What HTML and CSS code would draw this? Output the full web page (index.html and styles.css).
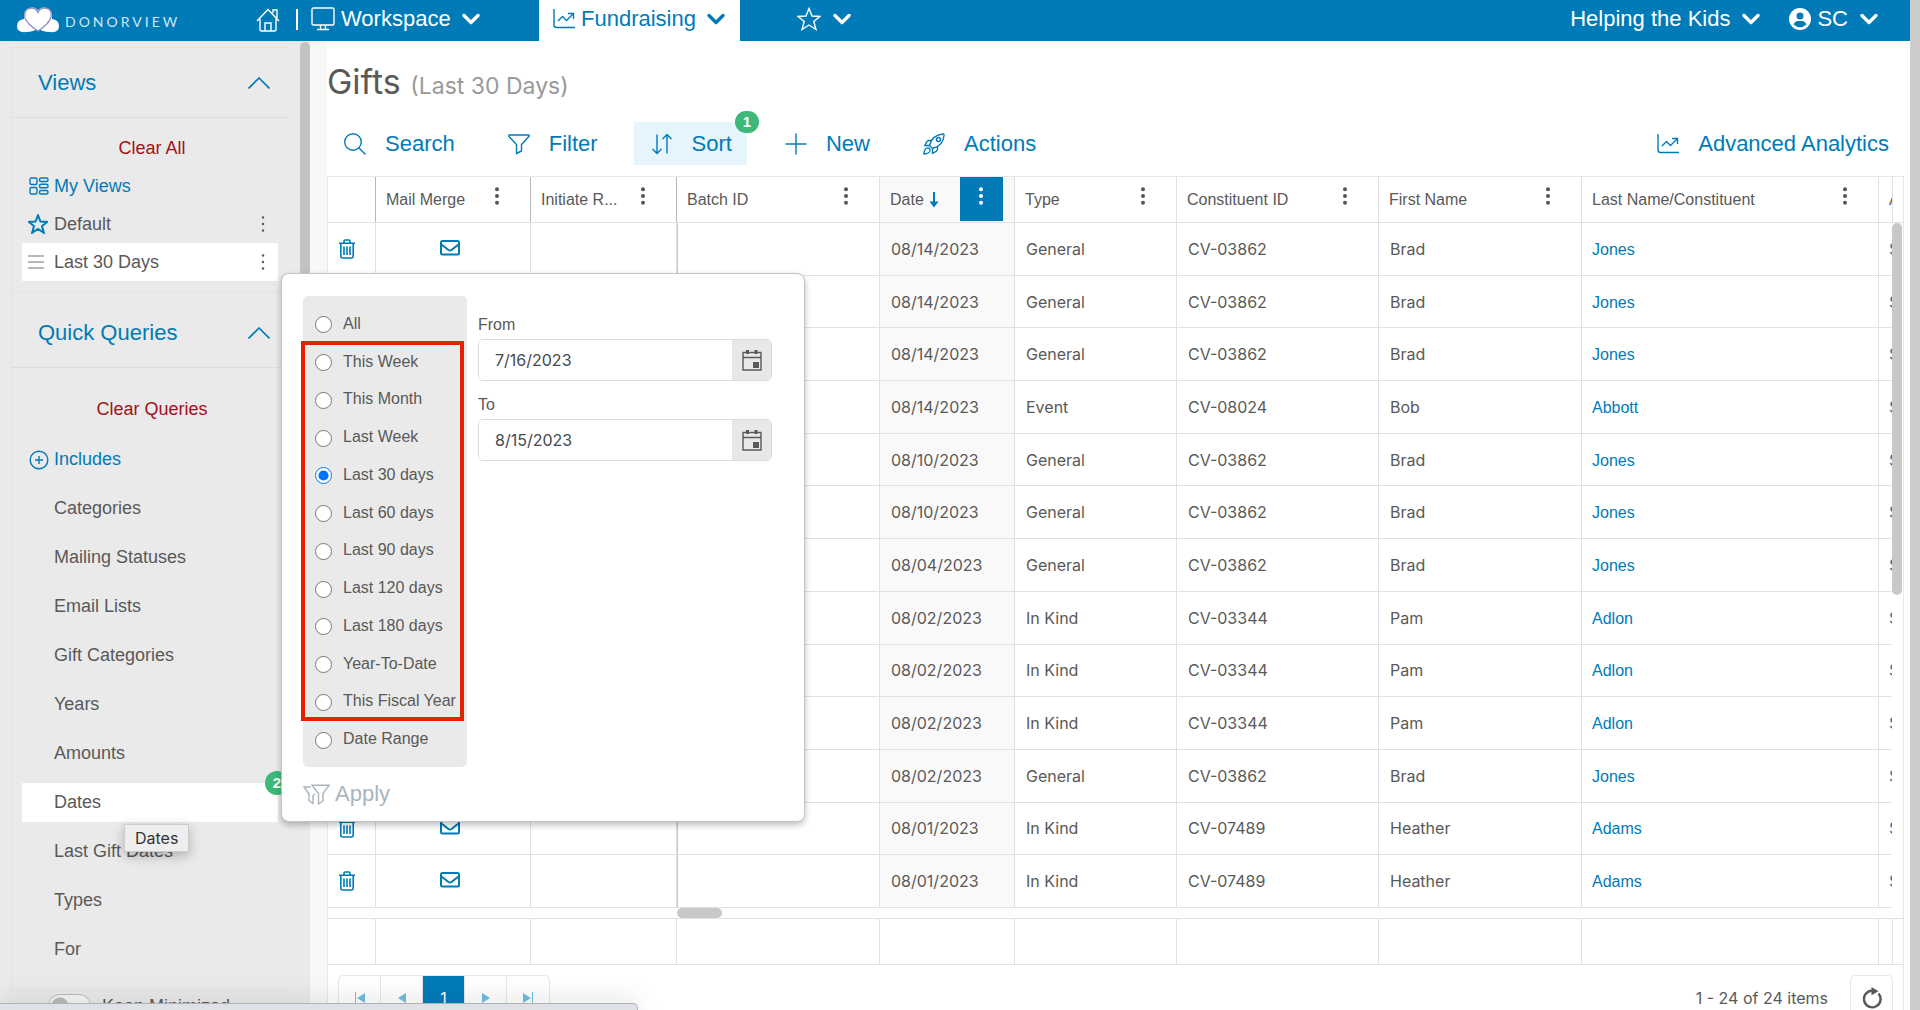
FILE: index.html
```html
<!DOCTYPE html>
<html lang="en">
<head>
    <meta charset="UTF-8">
    <meta name="viewport" content="width=device-width, initial-scale=1.0">
    <title>Gifts - DonorView</title>
    <link rel="stylesheet" href="styles.css">
</head>
<body>

    <!-- Icon set -->
    <svg class="icon-set" aria-hidden="true">
        <symbol id="i-home" viewBox="0 0 24 24"><path d="M1 13 12 1.5 23 13M17 5V2h4v8M4 11v10.5q0 1.5 1.500 1.500h13q1.500 0 1.500-1.500V11M9 23v-8h6v8"/></symbol>
        <symbol id="i-monitor" viewBox="0 0 24 24"><path d="M2.500 1h19q1.500 0 1.500 1.500v14q0 1.500-1.500 1.500h-19Q1 18 1 16.500v-14Q1 1 2.500 1zM9.500 18v4M14.500 18v4M6 22.500h12"/></symbol>
        <symbol id="i-chart" viewBox="0 0 22 22"><path d="M1 1v16q0 2.500 2.500 2.500H22M5 13l4.500-4.500 4 4L20 6M15 5.500h5.500V11"/></symbol>
        <symbol id="i-star" viewBox="0 0 24 24"><path d="M12 1.500l3 7.500 8 .5-6.200 5 2.200 8-7-4.500-7 4.500 2.200-8L1 9.500 9 9z"/></symbol>
        <symbol id="i-down" viewBox="0 0 18 12"><path d="M2 2.500l7 7 7-7"/></symbol>
        <symbol id="i-up" viewBox="0 0 22 12"><path d="M.5 11.500 11 1l10.500 10.500"/></symbol>
        <symbol id="i-search" viewBox="0 0 22 22"><circle cx="9" cy="9" r="8.300"/><path d="M15 15l6.500 6.500"/></symbol>
        <symbol id="i-filter" viewBox="0 0 22 22"><path d="M1.200 2h19.600q.8.600 0 1.600L13.500 11.500V18l-5 2.500v-9L1 3.600Q.5 2.500 1.200 2z"/></symbol>
        <symbol id="i-sort" viewBox="0 0 22 22"><path d="M6 1.500v19M1.500 16 6 20.500l4.500-4.500M16 20.500v-19M11.500 6 16 1.500 20.500 6"/></symbol>
        <symbol id="i-plus" viewBox="0 0 22 22"><path d="M11 .5v21M.5 11h21"/></symbol>
        <symbol id="i-rocket" viewBox="0 0 22 22"><path d="M6.500 12.500Q9 2 20 1q1.200 0 1 1.200-.5 10.300-11.500 13.300zM9 7.500H6q-1.500 0-2.300 1.300L1.800 12.500l4.700 0M14.500 13v3q0 1.500-1.300 2.300l-3.700 2 0-4.800M5.500 15q-2-.5-3.200 1.200Q1 18 1 21q3 0 4.700-1.200Q7.500 18.500 7 16.500 6.500 15.300 5.500 15z"/><circle cx="15.500" cy="6.500" r="2"/></symbol>
        <symbol id="i-views" viewBox="0 0 20 18"><rect x="1" y="1" width="7" height="6.500" rx="1.500"/><rect x="1" y="10.500" width="7" height="6.500" rx="1.500"/><rect x="10.500" y="1" width="8.500" height="3.500" rx="1.500"/><rect x="10.500" y="7.200" width="8.500" height="3.500" rx="1.500"/><rect x="10.500" y="13.500" width="8.500" height="3.500" rx="1.500"/></symbol>
        <symbol id="i-bars" viewBox="0 0 18 16"><path d="M1 2h16M1 8h16M1 14h16"/></symbol>
        <symbol id="i-pluscircle" viewBox="0 0 20 20"><circle cx="10" cy="10" r="8.800"/><path d="M10 6v8M6 10h8"/></symbol>
        <symbol id="i-dots" viewBox="0 0 6 18"><circle cx="3" cy="2.300" r="2"/><circle cx="3" cy="9" r="2"/><circle cx="3" cy="15.700" r="2"/></symbol>
        <symbol id="i-dots-small" viewBox="0 0 6 18"><circle cx="3" cy="2.500" r="1.200"/><circle cx="3" cy="9" r="1.200"/><circle cx="3" cy="15.500" r="1.200"/></symbol>
        <symbol id="i-trash" viewBox="0 0 16 20"><path d="M0 4.200h16M5 4V2q0-1 1-1h4q1 0 1 1v2M1.800 4.500V17q0 2 2 2h8.400q2 0 2-2V4.500M5 7.500v8.500M8 7.500v8.500M11 7.500v8.500"/></symbol>
        <symbol id="i-mail" viewBox="0 0 20 16"><rect x="1" y="1" width="18" height="13.500" rx="1.500"/><path d="M1.500 4.500 8.500 10q1.500 1 3 0l7-5.500"/></symbol>
        <symbol id="i-calendar" viewBox="0 0 20 22"><path d="M1 3.500h18v17.500H1zM1 8.500h18"/><path class="solid" d="M4 1h3v4H4zM12.500 1h3v4h-3zM11 13h6v6h-6z"/></symbol>
        <symbol id="i-arrow" viewBox="0 0 10 16"><path d="M5 0v12"/><path class="solid" d="M.5 9.500h9L5 15.500z"/></symbol>
        <symbol id="i-filters" viewBox="0 0 27 21"><path d="M9 1.200h17.200L20 9.500v7.500l-4.500 3V9.500zM7.500 3H1l5 7v6.500l4 3v-8L12 10"/></symbol>
        <symbol id="i-refresh" viewBox="0 0 22 22"><path d="M17.500 6.500A8.300 8.300 0 1 1 11 3.700h1.500"/><path class="solid" d="M10.500 0l7 4.200-7 4z"/></symbol>
        <symbol id="i-prev" viewBox="0 0 10 12"><path class="solid" d="M9 1v10L1 6z"/></symbol>
        <symbol id="i-next" viewBox="0 0 10 12"><path class="solid" d="M1 1v10l8-5z"/></symbol>
        <symbol id="i-first" viewBox="0 0 10 12"><path class="solid" d="M0 0h1v12H0zM10 1v10L2 6z"/></symbol>
        <symbol id="i-last" viewBox="0 0 10 12"><path class="solid" d="M9 0h1v12H9zM0 1v10l8-5z"/></symbol>
    </svg>

    <div class="app">
        <header class="topbar">
            <a class="logo" href="#">
                <svg class="logo-mark" viewBox="0 0 44 28" aria-hidden="true">
                    <path d="M10 26Q1 27 1 20q0-6 7-7-1-11 8-11.500 4-.2 6 3 2-3.200 6-3Q37 2 36 13q7 1 7 7 0 7-9 6-8 0-12-4-4 4-12 4z" fill="#fff"/>
                    <path d="M9 12q-1.500-9.500 6-10 5-.3 7 4.500 2-4.800 7-4.500 7.500.5 6 9Q33 18 22 25 11 18 9 12z" fill="#fff" stroke="#8f8fc4" stroke-width="1.300"/>
                </svg>
                <span class="logo-text">DONORVIEW</span>
            </a>
            <nav class="topnav">
                <a class="home" href="#" aria-label="Home"><svg class="icon i24"><use href="#i-home"/></svg></a>
                <span class="divider"></span>
                <button class="workspace"><svg class="icon i24"><use href="#i-monitor"/></svg>Workspace<svg class="icon chev"><use href="#i-down"/></svg></button>
                <button class="tab"><svg class="icon i22"><use href="#i-chart"/></svg>Fundraising<svg class="icon chev"><use href="#i-down"/></svg></button>
                <button class="favorites" aria-label="Favorites"><svg class="icon i24"><use href="#i-star"/></svg><svg class="icon chev"><use href="#i-down"/></svg></button>
            </nav>
            <div class="account">
                <button>Helping the Kids<svg class="icon chev"><use href="#i-down"/></svg></button>
                <button>
                    <svg class="avatar" viewBox="0 0 22 22"><circle cx="11" cy="11" r="11" fill="#fff"/><circle cx="11" cy="8" r="3.500" fill="#007bb8"/><path d="M4.500 16.500Q6 13 9 13h4q3 0 4.500 3.500-6.500 5.500-13 0z" fill="#007bb8"/></svg>SC<svg class="icon chev"><use href="#i-down"/></svg>
                </button>
            </div>
        </header>

        <div class="page">
            <aside class="sidebar">
                <div class="sidebar-content">
                    <section class="card">
                        <h2 class="card-title">Views<svg class="icon up"><use href="#i-up"/></svg></h2>
                        <button class="clear">Clear All</button>
                        <ul class="views">
                            <li class="blue"><svg class="icon side"><use href="#i-views"/></svg>My Views</li>
                            <li><svg class="icon side star"><use href="#i-star"/></svg>Default<svg class="dots"><use href="#i-dots-small"/></svg></li>
                            <li class="active"><svg class="icon side bars"><use href="#i-bars"/></svg>Last 30 Days<svg class="dots"><use href="#i-dots-small"/></svg></li>
                        </ul>
                    </section>
                    <section class="card">
                        <h2 class="card-title">Quick Queries<svg class="icon up"><use href="#i-up"/></svg></h2>
                        <button class="clear queries-clear">Clear Queries</button>
                        <ul class="queries">
                            <li class="blue"><svg class="icon side"><use href="#i-pluscircle"/></svg>Includes</li>
                            <li>Categories</li>
                            <li>Mailing Statuses</li>
                            <li>Email Lists</li>
                            <li>Gift Categories</li>
                            <li>Years</li>
                            <li>Amounts</li>
                            <li class="active">Dates<span class="badge side-badge">2</span><span class="tooltip">Dates</span></li>
                            <li>Last Gift Dates</li>
                            <li>Types</li>
                            <li>For</li>
                        </ul>
                    </section>
                    <label class="minimize"><input type="checkbox">Keep Minimized</label>
                </div>
                <div class="sidebar-thumb"></div>
            </aside>

            <main class="main">
                <h1>Gifts <small>(Last 30 Days)</small></h1>
                <div class="toolbar">
                    <button><svg class="icon i22"><use href="#i-search"/></svg>Search</button>
                    <button><svg class="icon i22"><use href="#i-filter"/></svg>Filter</button>
                    <button class="active"><svg class="icon i22"><use href="#i-sort"/></svg>Sort<span class="badge">1</span></button>
                    <button><svg class="icon i22"><use href="#i-plus"/></svg>New</button>
                    <button><svg class="icon i22"><use href="#i-rocket"/></svg>Actions</button>
                    <button class="analytics"><svg class="icon i22"><use href="#i-chart"/></svg>Advanced Analytics</button>
                </div>

                <div class="grid">
                    <div class="grid-header"><table id="gridHead"></table></div>
                    <div class="grid-body">
                        <div class="grid-view"><table id="gridRows"></table></div>
                        <div class="thumb-v"></div>
                        <div class="thumb-h"></div>
                    </div>
                    <div class="grid-footer"><table id="gridFoot"></table></div>
                    <div class="pager">
                        <div class="pages">
                            <button aria-label="First page"><svg><use href="#i-first"/></svg></button>
                            <button aria-label="Previous page"><svg><use href="#i-prev"/></svg></button>
                            <button class="current">1</button>
                            <button aria-label="Next page"><svg><use href="#i-next"/></svg></button>
                            <button aria-label="Last page"><svg><use href="#i-last"/></svg></button>
                        </div>
                        <span class="count">1 - 24 of 24 items</span>
                        <button class="refresh" aria-label="Refresh"><svg class="icon i22"><use href="#i-refresh"/></svg></button>
                    </div>
                </div>
            </main>
        </div>
    </div>
    <div class="page-scroll"></div>

    <!-- Dates popup -->
    <form class="popup">
        <div class="popup-row">
            <div class="ranges">
                <label><input type="radio" name="range">All</label>
                <label><input type="radio" name="range">This Week</label>
                <label><input type="radio" name="range">This Month</label>
                <label><input type="radio" name="range">Last Week</label>
                <label><input type="radio" name="range" checked>Last 30 days</label>
                <label><input type="radio" name="range">Last 60 days</label>
                <label><input type="radio" name="range">Last 90 days</label>
                <label><input type="radio" name="range">Last 120 days</label>
                <label><input type="radio" name="range">Last 180 days</label>
                <label><input type="radio" name="range">Year-To-Date</label>
                <label><input type="radio" name="range">This Fiscal Year</label>
                <label><input type="radio" name="range">Date Range</label>
                <div class="highlight"></div>
            </div>
            <div class="dates">
                <label for="fromDate">From</label>
                <div class="date-box">
                    <input type="text" id="fromDate" value="7/16/2023">
                    <button type="button" aria-label="Pick from date"><svg class="icon cal"><use href="#i-calendar"/></svg></button>
                </div>
                <label for="toDate">To</label>
                <div class="date-box">
                    <input type="text" id="toDate" value="8/15/2023">
                    <button type="button" aria-label="Pick to date"><svg class="icon cal"><use href="#i-calendar"/></svg></button>
                </div>
            </div>
        </div>
        <button type="button" class="apply"><svg class="icon"><use href="#i-filters"/></svg>Apply</button>
    </form>

    <div class="statusbar"></div>

    <script>
        // Column titles and widths
        const columns = [
            ['', 48], ['Mail Merge', 155], ['Initiate R...', 146], ['Batch ID', 203], ['Date', 135],
            ['Type', 162], ['Constituent ID', 202], ['First Name', 203], ['Last Name/Constituent', 297], ['A', 162]
        ];

        const gifts = [
            ['08/14/2023', 'General', 'CV-03862', 'Brad', 'Jones'],
            ['08/14/2023', 'General', 'CV-03862', 'Brad', 'Jones'],
            ['08/14/2023', 'General', 'CV-03862', 'Brad', 'Jones'],
            ['08/14/2023', 'Event', 'CV-08024', 'Bob', 'Abbott'],
            ['08/10/2023', 'General', 'CV-03862', 'Brad', 'Jones'],
            ['08/10/2023', 'General', 'CV-03862', 'Brad', 'Jones'],
            ['08/04/2023', 'General', 'CV-03862', 'Brad', 'Jones'],
            ['08/02/2023', 'In Kind', 'CV-03344', 'Pam', 'Adlon'],
            ['08/02/2023', 'In Kind', 'CV-03344', 'Pam', 'Adlon'],
            ['08/02/2023', 'In Kind', 'CV-03344', 'Pam', 'Adlon'],
            ['08/02/2023', 'General', 'CV-03862', 'Brad', 'Jones'],
            ['08/01/2023', 'In Kind', 'CV-07489', 'Heather', 'Adams'],
            ['08/01/2023', 'In Kind', 'CV-07489', 'Heather', 'Adams']
        ];

        const colgroup = '<colgroup>' + columns.map(c => `<col style="width:${c[1]}px">`).join('') + '</colgroup>';
        const menu = '<button class="col-menu" aria-label="Column menu"><svg class="dots"><use href="#i-dots"/></svg></button>';
        const sortArrow = '<svg class="icon sort-arrow"><use href="#i-arrow"/></svg>';

        // Header
        document.getElementById('gridHead').innerHTML = colgroup + '<thead><tr>' + columns.map(([title]) => {
            const sorted = title === 'Date';
            const content = title ? `<div class="head"><span>${title}</span>${sorted ? sortArrow : ''}${menu}</div>` : '';
            return `<th class="${sorted ? 'sorted' : ''}">${content}</th>`;
        }).join('') + '</tr></thead>';

        // Rows
        document.getElementById('gridRows').innerHTML = colgroup + '<tbody>' + gifts.map(g => `
            <tr>
                <td><svg class="icon trash"><use href="#i-trash"/></svg></td>
                <td class="mail-cell"><svg class="icon mail"><use href="#i-mail"/></svg></td>
                <td></td>
                <td></td>
                <td class="sorted">${g[0]}</td>
                <td>${g[1]}</td>
                <td>${g[2]}</td>
                <td>${g[3]}</td>
                <td class="link-cell"><a href="#">${g[4]}</a></td>
                <td class="link-cell"><a href="#">S</a></td>
            </tr>`).join('') + '</tbody>';

        // Empty totals row
        document.getElementById('gridFoot').innerHTML = colgroup + '<tbody><tr>' + columns.map(() => '<td></td>').join('') + '</tr></tbody>';
    </script>
</body>
</html>
```

FILE: styles.css
```css
/* Base Styling */
* {
    box-sizing: border-box;
}

body {
    font-family: "Liberation Sans", Arial, sans-serif;
    font-size: 16px;
    color: #595959;
    background-color: #fff;
    margin: 0;
    height: 100vh;
    display: flex;
    overflow: hidden;
}

button {
    font-family: inherit;
    background: none;
    border: none;
    padding: 0;
    display: flex;
    align-items: center;
    cursor: pointer;
}

ul {
    list-style: none;
    margin: 0;
    padding: 0;
}

a {
    color: #007bb8;
    text-decoration: none;
}

/* Icons */
.icon-set {
    display: none;
}

.icon {
    fill: none;
    stroke: currentColor;
    stroke-width: 1.4;
    flex: none;
}

.solid {
    fill: currentColor;
    stroke: none;
}

.i24 {
    width: 24px;
    height: 24px;
}

.i22 {
    width: 22px;
    height: 22px;
}

.chev {
    width: 18px;
    height: 12px;
    stroke-width: 3.4;
    stroke-linecap: round;
    stroke-linejoin: round;
}

.dots {
    width: 6px;
    height: 18px;
    fill: currentColor;
}

.badge {
    position: absolute;
    width: 24px;
    height: 22px;
    line-height: 22px;
    border-radius: 12px;
    background-color: #3cb878;
    color: #fff;
    font-size: 15px;
    font-weight: bold;
    text-align: center;
}

/* Top bar */
.app {
    flex: 1;
    min-width: 0;
    display: flex;
    flex-direction: column;
}

.page-scroll {
    width: 10px;
    background-color: #ccc;
}

.topbar {
    height: 41px;
    flex: none;
    display: flex;
    background-color: #007bb8;
    color: #fff;
    padding: 0 32px 0 16px;
}

.topbar button {
    color: #fff;
    font-size: 22px;
    padding-bottom: 3px;
}

.logo {
    display: flex;
    align-items: center;
    gap: 5px;
    width: 240px;
    padding-bottom: 2px;
    color: #cfe6f3;
}

.logo-mark {
    width: 44px;
    height: 28px;
}

.logo-text {
    font-family: Lato, sans-serif;
    font-size: 14px;
    letter-spacing: 3px;
    padding-top: 4px;
}

.topnav {
    display: flex;
    align-items: stretch;
    flex: 1;
}

.home {
    display: flex;
    align-items: center;
    padding-bottom: 2px;
    color: #fff;
}

.divider {
    width: 2px;
    height: 21px;
    margin: 9px 13px 0 16px;
    background-color: #fff;
}

.workspace {
    width: 228px;
    gap: 6px;
}

.topbar .chev {
    margin-left: 12px;
}

.workspace .chev,
.tab .chev {
    margin-left: 5px;
}

.topbar .tab {
    background-color: #fff;
    color: #007bb8;
    padding-left: 14px;
    padding-right: 15px;
    gap: 6px;
}

.favorites {
    margin-left: 57px;
}

.account {
    display: flex;
    gap: 29px;
}

.avatar {
    width: 22px;
    height: 22px;
    margin-right: 6px;
}

/* Sidebar */
.page {
    flex: 1;
    min-height: 0;
    display: flex;
    background-color: #f8f8f8;
}

.sidebar {
    width: 310px;
    flex: none;
    display: flex;
    background-color: #eaeaea;
    border-top: 1px solid #dfe5ea;
}

.sidebar-content {
    flex: 1;
    padding: 5px 10px 0 11px;
}

.sidebar-thumb {
    width: 10px;
    height: 400px;
    border-radius: 5px;
    background-color: #c2c2c2;
}

.card {
    border: 1px solid #e0e3e7;
    border-right: none;
    border-radius: 3px;
}

.card + .card {
    border-top: none;
}

.card-title {
    margin: 0;
    height: 70px;
    padding: 0 20px 0 26px;
    display: flex;
    align-items: center;
    justify-content: space-between;
    font-size: 22px;
    font-weight: normal;
    color: #007bb8;
    border-bottom: 1px solid #d9dee4;
}

.card + .card .card-title {
    height: 75px;
    padding-top: 5px;
}

.up {
    width: 22px;
    height: 12px;
    stroke-width: 1.6;
}

.clear {
    margin: 20px auto 8px;
    padding-left: 2px;
    height: 21px;
    font-size: 18px;
    color: #a3111a;
}

.queries-clear {
    margin: 31px auto 20px;
}

.views,
.queries {
    padding: 0 12px 11px 10px;
}

.views li,
.queries li {
    position: relative;
    height: 38px;
    display: flex;
    align-items: center;
    font-size: 18px;
    padding-left: 32px;
    padding-right: 12px;
}

.queries li {
    height: 39px;
    margin-bottom: 10px;
}

.blue {
    color: #007bb8;
}

.side {
    position: absolute;
    left: 7px;
    width: 20px;
    height: 20px;
}

.star {
    left: 6px;
    color: #007bb8;
    stroke-width: 2.4;
}

.bars {
    left: 5px;
    width: 18px;
    height: 16px;
    color: #b8b8b8;
    stroke-width: 2;
}

.views .dots {
    margin-left: auto;
}

.views .active,
.queries .active {
    background-color: #fff;
}

.side-badge {
    left: 243px;
    top: -12px;
    height: 24px;
    line-height: 24px;
}

.tooltip {
    position: absolute;
    left: 102px;
    top: 41px;
    z-index: 2;
    padding: 0 10px;
    border: 1px solid #ccc;
    background-color: #eee;
    color: #333;
    font-family: Inter, sans-serif;
    font-size: 16px;
    line-height: 26px;
    box-shadow: 0 4px 12px rgba(0, 0, 0, 0.25);
}

.minimize {
    display: flex;
    align-items: center;
    gap: 11px;
    padding: 3px 0 0 37px;
    font-size: 18px;
}

.minimize input {
    appearance: none;
    width: 43px;
    height: 24px;
    margin: 0;
    border: 1px solid #bbb;
    border-radius: 12px;
    background: radial-gradient(circle at 11px 11px, #bbb 8px, #f6f6f6 9px);
}

/* Main */
.main {
    flex: 1;
    min-width: 0;
    margin-left: 17px;
    padding-right: 6px;
    background-color: #fff;
    display: flex;
    flex-direction: column;
}

h1 {
    font-family: Inter, sans-serif;
    font-size: 34px;
    line-height: 40px;
    font-weight: normal;
    margin: 21px 0 16px;
}

h1 small {
    font-size: 23px;
    color: #999;
}

.toolbar {
    display: flex;
    gap: 21px;
    margin-bottom: 11px;
}

.toolbar button {
    position: relative;
    height: 43px;
    padding: 0 15px 0 17px;
    gap: 19px;
    font-size: 22px;
    color: #007bb8;
}

.toolbar .active {
    background-color: #e6f4fb;
}

.toolbar .badge {
    right: -12px;
    top: -11px;
}

.toolbar .analytics {
    margin-left: auto;
}

/* Grid */
.grid {
    border: 1px solid #e4e7eb;
    border-bottom: none;
    flex: 1;
}

table {
    width: 1713px;
    table-layout: fixed;
    border-collapse: separate;
    border-spacing: 0;
}

th,
td {
    padding: 0 11px;
    border-right: 1px solid #dee2e6;
    border-bottom: 1px solid #dee2e6;
    text-align: left;
    font-weight: normal;
    white-space: nowrap;
}

.grid-header,
.grid-footer {
    position: relative;
    overflow: hidden;
    padding-right: 9px;
    border-bottom: 1px solid #dee2e6;
}

.grid-header table,
.grid-footer table {
    height: 45px;
}

/* gutter above and below the vertical scrollbar */
.grid-header::after,
.grid-footer::after {
    content: "";
    position: absolute;
    top: 0;
    right: 0;
    bottom: 0;
    width: 10px;
    border-left: 1px solid #dee2e6;
    background-color: #fff;
}

th,
.grid-footer td {
    border-bottom: none;
}

th,
.link-cell {
    padding-left: 10px;
}

th:nth-child(-n+3) {
    border-right-color: #b4b8bb;
}

.head {
    display: flex;
    align-items: center;
    height: 45px;
}

.col-menu {
    width: 43px;
    height: 44px;
    margin-left: auto;
    margin-bottom: 1px;
    padding-bottom: 6px;
    padding-right: 2px;
    justify-content: center;
    color: #555;
}

.sorted {
    background-color: #f9f9f9;
}

.sorted .col-menu {
    background-color: #007bb8;
    color: #fff;
}

.sort-arrow {
    width: 10px;
    height: 16px;
    margin-left: 5px;
    color: #007bb8;
    stroke-width: 2;
}

.grid-body {
    position: relative;
}

.grid-view {
    overflow: hidden;
    margin-right: 11px;
    padding-bottom: 10px;
}

.grid-view table {
    height: 685px;
    font-family: Inter, sans-serif;
}

.grid-view td:nth-child(4) {
    border-left: 1px solid #c4c8cb;
}

.grid-view a {
    font-family: "Liberation Sans", Arial, sans-serif;
}

.grid-view .icon {
    display: block;
    color: #007bb8;
    stroke-width: 1.6;
}

.trash {
    width: 16px;
    height: 20px;
}

.grid-view .mail {
    width: 20px;
    height: 16px;
    margin: 0 auto;
    stroke-width: 2;
}

.mail-cell {
    padding: 0 17px 2px 10px;
}

.thumb-v {
    position: absolute;
    top: 0;
    right: 1px;
    width: 10px;
    height: 372px;
    border-radius: 5px;
    background-color: #c8c8c8;
}

.thumb-h {
    position: absolute;
    left: 349px;
    bottom: 0;
    width: 45px;
    height: 10px;
    border-radius: 5px;
    background-color: #c8c8c8;
}

.grid-footer {
    border-top: 1px solid #dee2e6;
}

/* Pager */
.pager {
    display: flex;
    align-items: center;
    padding: 10px;
    font-family: Inter, sans-serif;
}

.pages {
    display: flex;
    border: 1px solid #e4e7eb;
    border-radius: 5px;
}

.pages button {
    width: 42px;
    height: 43px;
    justify-content: center;
    border-right: 1px solid #e4e7eb;
    color: #70bfe3;
    font-size: 16px;
}

.pages button:last-child {
    border-right: none;
}

.pages svg {
    width: 10px;
    height: 12px;
}

.pages .current {
    background-color: #007bb8;
    color: #fff;
}

.count {
    margin-left: auto;
    margin-right: 22px;
}

.refresh {
    width: 43px;
    height: 45px;
    justify-content: center;
    border: 1px solid #e4e7eb;
    border-radius: 5px;
    color: #595959;
}

.refresh .icon {
    stroke-width: 2.4;
}

/* Dates popup */
.popup {
    position: absolute;
    left: 281px;
    top: 273px;
    z-index: 5;
    width: 524px;
    padding: 22px 21px 13px;
    background-color: #fff;
    border: 1px solid #c4c4c4;
    border-radius: 8px;
    box-shadow: 0 3px 6px rgba(0, 0, 0, 0.25);
}

.popup-row {
    display: flex;
    gap: 11px;
}

.ranges {
    position: relative;
    display: flex;
    flex-direction: column;
    width: 164px;
    height: 471px;
    padding: 9px 0;
    background-color: #eaeaea;
    border-radius: 5px;
}

.ranges label {
    flex: 1;
    display: flex;
    align-items: center;
    white-space: nowrap;
}

.ranges input {
    width: 17px;
    height: 17px;
    margin: 2px 11px 0 12px;
    accent-color: #0075ff;
}

.highlight {
    position: absolute;
    left: -2px;
    top: 45px;
    width: 163px;
    height: 380px;
    border: 4px solid #e62200;
    pointer-events: none;
}

.dates {
    width: 294px;
    padding-top: 19px;
}

.dates label {
    display: block;
    line-height: 20px;
    margin-bottom: 4px;
}

.date-box {
    display: flex;
    height: 42px;
    margin-bottom: 14px;
    border: 1px solid #d5dbe1;
    border-radius: 5px;
    overflow: hidden;
}

.date-box input {
    flex: 1;
    min-width: 0;
    border: none;
    padding: 0 16px;
    font-family: Inter, sans-serif;
    font-size: 16px;
    color: #424a52;
}

.date-box button {
    width: 39px;
    justify-content: center;
    background-color: #e8e8e8;
    color: #595959;
}

.cal {
    width: 20px;
    height: 22px;
}

.apply {
    margin-top: 13px;
    gap: 5px;
    height: 28px;
    font-size: 22px;
    color: #a9b4bf;
}

.apply .icon {
    width: 27px;
    height: 21px;
}

/* Browser status bubble at the window's bottom edge */
.statusbar {
    position: absolute;
    left: 0;
    bottom: 0;
    z-index: 6;
    width: 638px;
    height: 7px;
    background-color: #dee1e6;
    border: 1px solid #b0b2b5;
    border-width: 1px 1px 0 0;
    border-radius: 0 5px 0 0;
    box-shadow: 0 0 24px rgba(0, 0, 0, 0.25);
}
```
